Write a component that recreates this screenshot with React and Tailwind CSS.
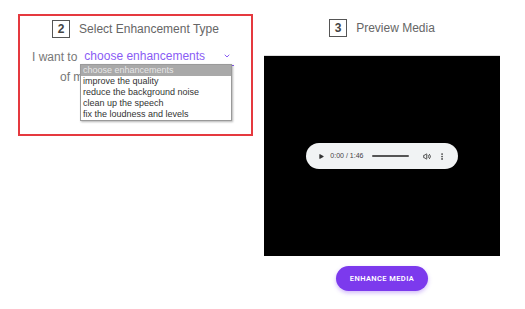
import React from 'react';
import { Play, Volume2, EllipsisVertical, ChevronDown } from 'lucide-react';

const options = [
  'improve the quality',
  'reduce the background noise',
  'clean up the speech',
  'fix the loudness and levels',
];

const StepTitle = ({ n, label }) => (
  <div className="flex items-center justify-center gap-[9px]">
    <span className="w-[18px] h-[18px] border border-[#555] flex items-center justify-center text-[12px] font-semibold text-[#444] leading-none">
      {n}
    </span>
    <span className="text-[12px] text-[#666]">{label}</span>
  </div>
);

const App = () => {
  return (
    <div className="w-[525px] h-[309px] bg-white flex font-['Liberation_Sans',Arial,sans-serif] overflow-hidden">
      {/* Step 2 */}
      <div className="ml-[18px] mt-[14px] w-[235px] h-[122px] border-2 border-[#e5393f] pt-[4px]">
        <StepTitle n="2" label="Select Enhancement Type" />
        <div className="relative mt-[10px] pl-[12px]">
          <div className="flex items-center text-[12px] text-[#777] whitespace-nowrap">
            <span>I want to</span>
            <div className="ml-[5px] w-[152px] flex items-center justify-between border-b border-dashed border-[#8a5cf5] pb-[1px]">
              <span className="ml-[2px] text-[12px] text-[#8a5cf5] leading-[15px]">choose enhancements</span>
              <ChevronDown size={8} strokeWidth={3} className="text-[#8a5cf5] mr-[3px]" />
            </div>
          </div>
          <div className="mt-[2px] pl-[28px] text-[12px] text-[#777]">of my media</div>

          {/* open native select list */}
          <div className="absolute left-[60px] top-[16px] w-[152px] bg-white border border-[#9a9a9a] shadow-[1px_1px_2px_rgba(0,0,0,0.3)] text-[9px] leading-[11px] text-[#333]">
            <div className="bg-[#a9a9a9] text-[#e6e6e6] px-[2px]">choose enhancements</div>
            {options.map((o) => (
              <div key={o} className="px-[2px]">{o}</div>
            ))}
          </div>
        </div>
      </div>

      {/* Step 3 */}
      <div className="ml-[11px] w-[236px] flex flex-col items-center">
        <div className="mt-[19px]">
          <StepTitle n="3" label="Preview Media" />
        </div>
        <div className="mt-[19px] w-[236px] h-[200px] bg-black flex items-center justify-center shadow-[0_-1px_0_#ddd]">
          <div className="w-[152px] h-[26px] rounded-full bg-[#f1f3f4] flex items-center px-[12px] text-[#333] whitespace-nowrap">
            <Play size={7} fill="currentColor" strokeWidth={0} />
            <span className="ml-[6px] text-[7px] text-[#444]">0:00 / 1:46</span>
            <div className="ml-[9px] w-[40px] h-[2px] rounded bg-[#555]" />
            <Volume2 size={9} className="ml-[14px]" strokeWidth={2.5} />
            <EllipsisVertical size={9} className="ml-[7px]" strokeWidth={3} />
          </div>
        </div>
        <button className="mt-[10px] w-[92px] h-[25px] rounded-full bg-[#7c3aed] text-white text-[7.5px] font-semibold tracking-[0.4px] uppercase shadow-[0_2px_4px_rgba(124,58,237,0.35)] font-['Roboto',sans-serif]">
          Enhance Media
        </button>
      </div>
    </div>
  );
};

export default App;
